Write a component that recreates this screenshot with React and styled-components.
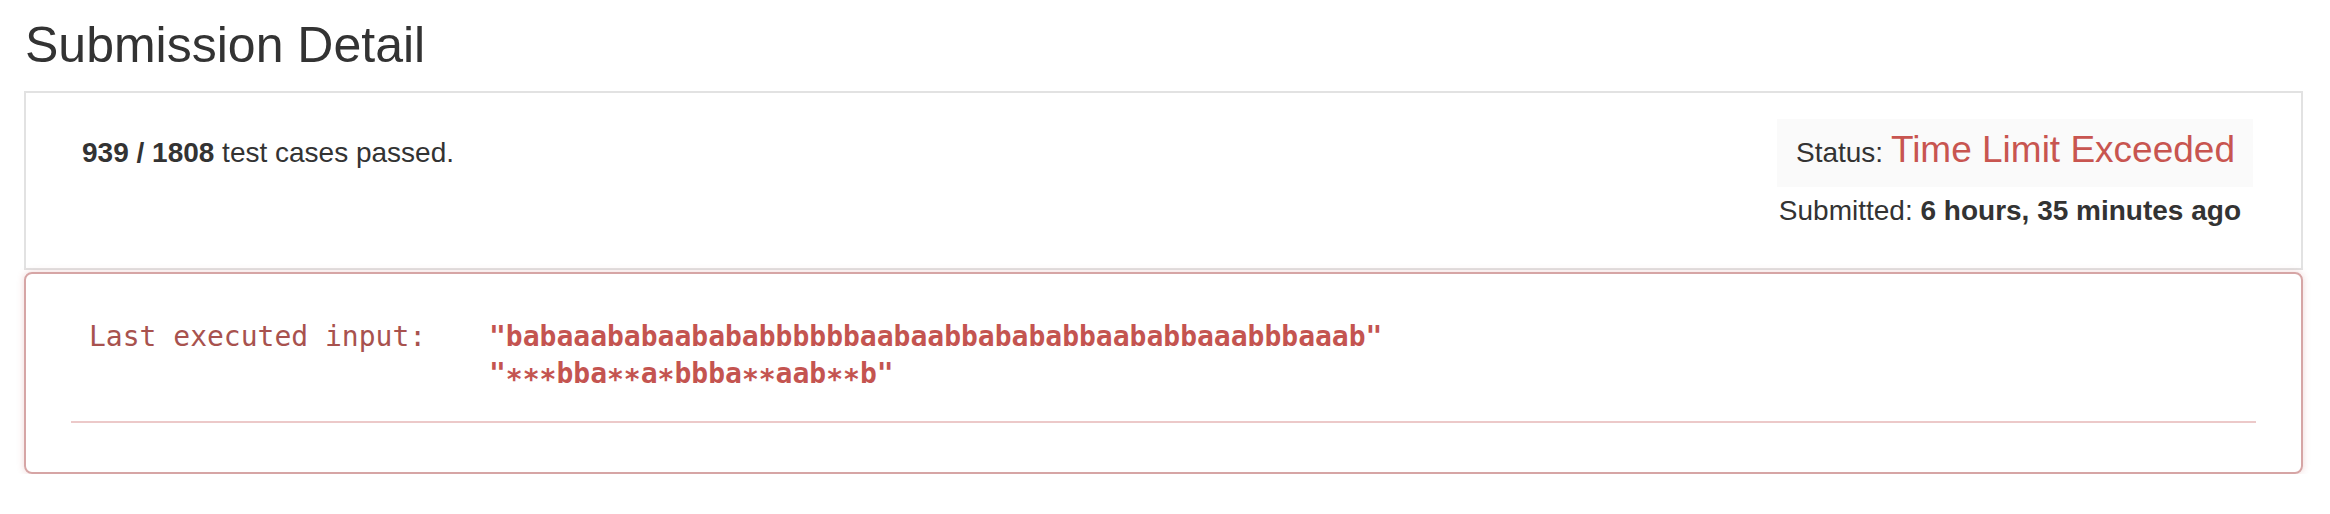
import React from 'react'
import styled, { createGlobalStyle } from 'styled-components'

const GlobalStyle = createGlobalStyle`
  body {
    margin: 0;
    background: #fff;
    color: #333;
    font-family: "Liberation Sans", Arial, sans-serif;
  }
`

const Page = styled.div`
  padding: 0 27px 0 24px;
`

const Title = styled.h3`
  margin: 18px 0 19px 1px;
  font-size: 50px;
  font-weight: 400;
  line-height: 54px;
  color: #333;
`

const ResultPanel = styled.div`
  display: flex;
  justify-content: space-between;
  align-items: baseline;
  padding: 26px 48px 37px 56px;
  border: 2px solid #e2e2e2;
`

const Passed = styled.div`
  font-size: 28px;
  line-height: 40px;

  b {
    font-weight: 700;
  }
`

const Meta = styled.div`
  display: flex;
  flex-direction: column;
  align-items: flex-end;
`

const StatusBox = styled.div`
  padding: 11px 18px 14px 19px;
  background: #fafafa;
  font-size: 28px;
  line-height: 40px;
`

const StatusText = styled.span`
  font-size: 37px;
  line-height: 40px;
  color: ${(p) => p.color};
`

const Submitted = styled.div`
  margin: 4px 12px 0 0;
  font-size: 28px;
  line-height: 40px;

  b {
    font-weight: 700;
  }
`

const InputPanel = styled.div`
  margin-top: 2px;
  padding: 44px 45px 49px;
  border: 2px solid #d6a5a5;
  border-radius: 8px;
  box-shadow: 0 0 7px rgba(190, 90, 90, 0.25);
`

const InputGrid = styled.div`
  display: grid;
  grid-template-columns: 400px 1fr;
  padding-left: 18px;
  font-family: "DejaVu Sans Mono", "Liberation Mono", monospace;
  font-size: 28px;
  line-height: 37px;
`

const InputLabel = styled.div`
  color: #a8524e;
  white-space: pre;
`

const InputValues = styled.div`
  color: #c45450;
  font-weight: 700;
  white-space: pre;
`

const Star = styled.span`
  display: inline-block;
  transform: translateY(6px);
`

const Divider = styled.hr`
  margin: 29px 0 0;
  border: 0;
  border-top: 2px solid #ecc9c9;
`

const inputs = [
  '"babaaababaabababbbbbbaabaabbabababbaababbaaabbbaaab"',
  '"***bba**a*bbba**aab**b"',
]

function InputLine({ text }) {
  const parts = text.split(/(\*+)/)
  return (
    <div>
      {parts.map((part, i) =>
        part.startsWith('*') ? <Star key={i}>{part}</Star> : part
      )}
    </div>
  )
}

export default function App() {
  return (
    <Page>
      <GlobalStyle />
      <Title>Submission Detail</Title>
      <ResultPanel>
        <Passed>
          <b>939 / 1808</b> test cases passed.
        </Passed>
        <Meta>
          <StatusBox>
            Status: <StatusText color="#c85550">Time Limit Exceeded</StatusText>
          </StatusBox>
          <Submitted>
            Submitted: <b>6 hours, 35 minutes ago</b>
          </Submitted>
        </Meta>
      </ResultPanel>
      <InputPanel>
        <InputGrid>
          <InputLabel>Last executed input:</InputLabel>
          <InputValues>
            {inputs.map((line) => (
              <InputLine key={line} text={line} />
            ))}
          </InputValues>
        </InputGrid>
        <Divider />
      </InputPanel>
    </Page>
  )
}
